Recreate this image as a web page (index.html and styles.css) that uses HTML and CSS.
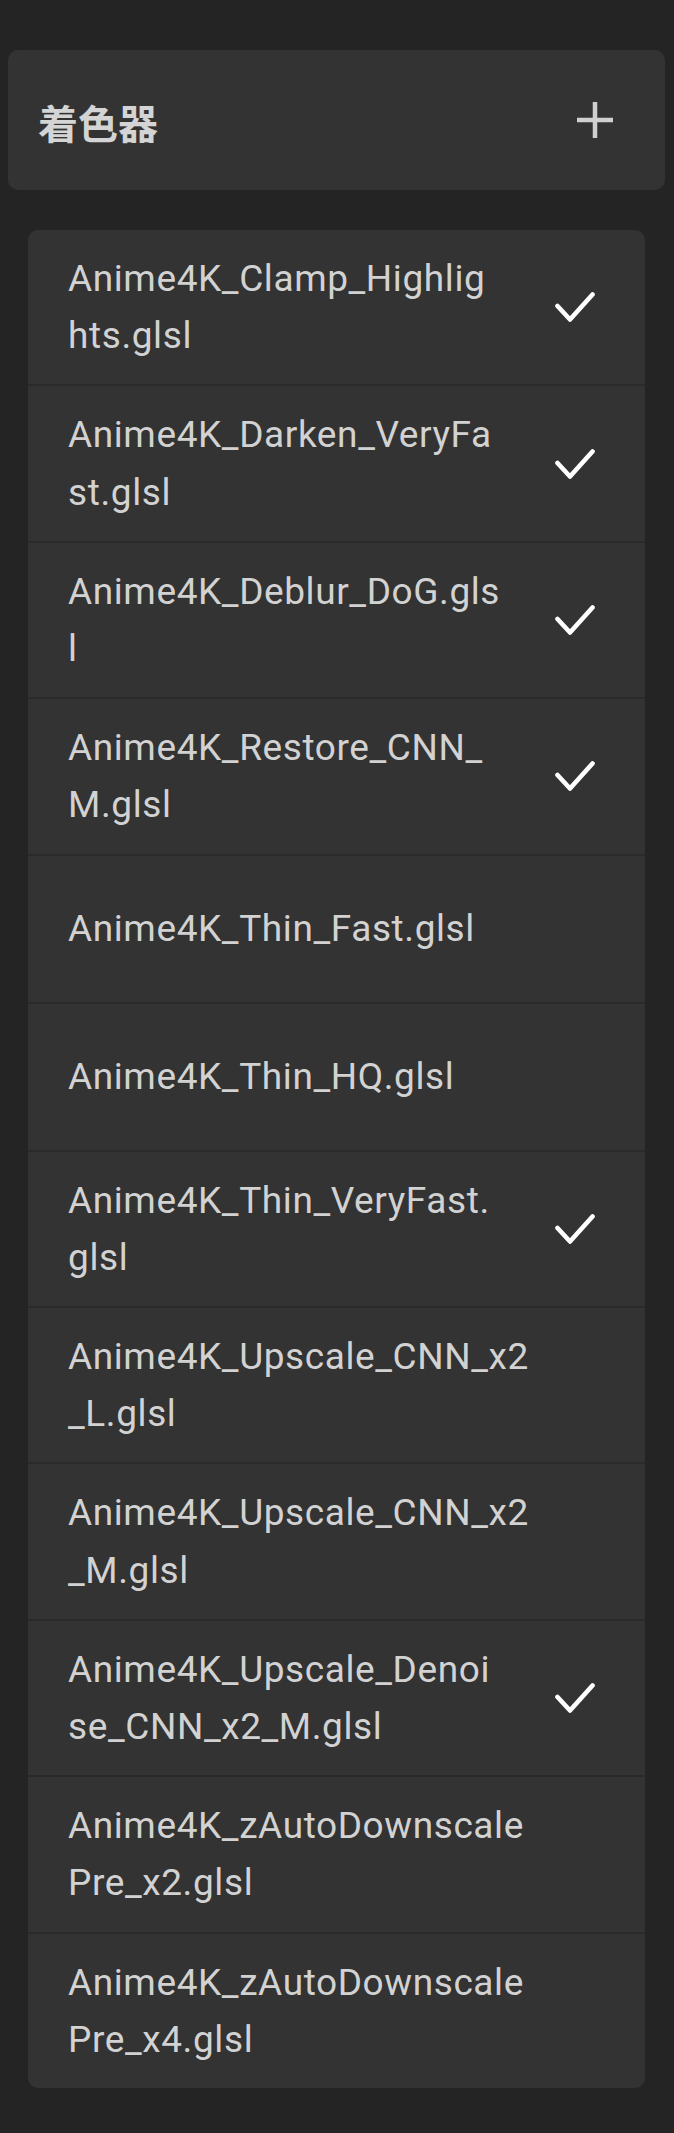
FILE: index.html
```html
<!DOCTYPE html>
<html lang="zh">
<head>
<meta charset="utf-8">
<title>着色器</title>
<link rel="stylesheet" href="styles.css">
</head>
<body>
<div class="page">
  <header class="section-head">
    <h1 class="section-title">着色器</h1>
    <button class="add-btn" aria-label="添加">
      <svg width="36" height="36" viewBox="0 0 36 36"><path d="M18 0V36M0 18H36" stroke="#d0d0d0" stroke-width="4.5" fill="none"/></svg>
    </button>
  </header>

  <ul class="shader-list">
    <li class="shader-row"><span class="shader-name">Anime4K_Clamp_Highlights.glsl</span><svg class="check" viewBox="0 0 40 30"><path d="M2.5 14L15 27.5L37.5 2.5"/></svg></li>
    <li class="shader-row"><span class="shader-name">Anime4K_Darken_VeryFast.glsl</span><svg class="check" viewBox="0 0 40 30"><path d="M2.5 14L15 27.5L37.5 2.5"/></svg></li>
    <li class="shader-row"><span class="shader-name">Anime4K_Deblur_DoG.glsl</span><svg class="check" viewBox="0 0 40 30"><path d="M2.5 14L15 27.5L37.5 2.5"/></svg></li>
    <li class="shader-row"><span class="shader-name">Anime4K_Restore_CNN_M.glsl</span><svg class="check" viewBox="0 0 40 30"><path d="M2.5 14L15 27.5L37.5 2.5"/></svg></li>
    <li class="shader-row single"><span class="shader-name">Anime4K_Thin_Fast.glsl</span></li>
    <li class="shader-row single"><span class="shader-name">Anime4K_Thin_HQ.glsl</span></li>
    <li class="shader-row"><span class="shader-name">Anime4K_Thin_VeryFast.glsl</span><svg class="check" viewBox="0 0 40 30"><path d="M2.5 14L15 27.5L37.5 2.5"/></svg></li>
    <li class="shader-row"><span class="shader-name">Anime4K_Upscale_CNN_x2_L.glsl</span></li>
    <li class="shader-row"><span class="shader-name">Anime4K_Upscale_CNN_x2_M.glsl</span></li>
    <li class="shader-row"><span class="shader-name">Anime4K_Upscale_Denoise_CNN_x2_M.glsl</span><svg class="check" viewBox="0 0 40 30"><path d="M2.5 14L15 27.5L37.5 2.5"/></svg></li>
    <li class="shader-row"><span class="shader-name">Anime4K_zAutoDownscalePre_x2.glsl</span></li>
    <li class="shader-row"><span class="shader-name">Anime4K_zAutoDownscalePre_x4.glsl</span></li>
  </ul>
</div>
</body>
</html>
```

FILE: styles.css
```css
html, body {
  margin: 0;
  padding: 0;
  background: #242424;
}

.page {
  padding-top: 50px;
  padding-bottom: 46px;
  font-family: Roboto, "Noto Sans CJK SC", sans-serif;
}

.section-head {
  margin: 0 9px 0 8px;
  height: 140px;
  background: #333333;
  border-radius: 10px;
  display: flex;
  align-items: center;
  justify-content: space-between;
  padding: 0 52px 0 30px;
  box-sizing: border-box;
}

.section-title {
  margin: 0;
  font-family: "Noto Sans CJK SC", sans-serif;
  font-weight: 700;
  font-size: 40px;
  line-height: 48px;
  color: #d4d4d4;
  padding-top: 4px;
}

.add-btn {
  background: none;
  border: 0;
  padding: 0;
  width: 36px;
  height: 36px;
  display: block;
}

.add-btn svg {
  display: block;
}

.shader-list {
  list-style: none;
  margin: 40px 29px 0 28px;
  padding: 0;
  background: #333333;
  border-radius: 10px;
  overflow: hidden;
}

.shader-row {
  display: flex;
  align-items: center;
  padding: 20px 50px 20px 40px;
  border-bottom: 2px solid #2a2a2a;
}

.shader-row:last-child {
  border-bottom: 0;
}

.shader-row.single {
  min-height: 106px;
}

.shader-name {
  flex: 1;
  min-width: 0;
  padding-right: 52px;
  font-size: 37px;
  line-height: 57.2px;
  letter-spacing: 0.6px;
  color: #d2d2d2;
  word-break: break-all;
}

.check {
  flex: none;
  width: 40px;
  height: 30px;
  display: block;
  fill: none;
  stroke: #ffffff;
  stroke-width: 4.6px;
  stroke-linecap: round;
  stroke-linejoin: round;
}
```
